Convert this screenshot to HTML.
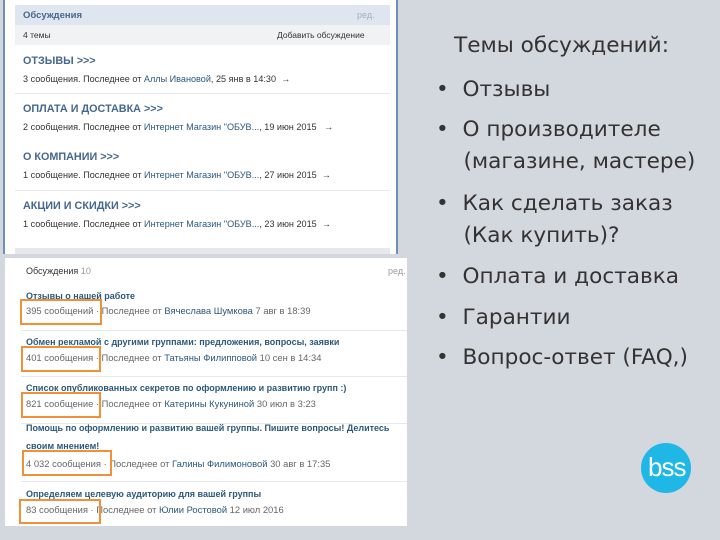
<!DOCTYPE html>
<html><head><meta charset="utf-8"><style>
body{margin:0;width:720px;height:540px;background:#d3d7de;position:relative;overflow:hidden;font-family:"Liberation Sans","Noto Sans CJK SC",sans-serif}
.a{position:absolute}
.p1{left:3px;top:0;width:391px;height:254px;background:#fff;border-left:2px solid #6f8fb8;border-right:2px solid #6f8fb8}
.t{font-size:9px;color:#333;white-space:nowrap}
.h{font-size:10.8px;font-weight:bold;color:#45688e;white-space:nowrap}
.s{font-size:9.1px;color:#333;white-space:nowrap}
.s b{font-weight:normal;color:#2b587a}
.hr{height:1px;background:#e5e8ec}
.p2{left:5px;top:258px;width:402px;height:268px;background:#fff}
.h2{font-size:9px;font-weight:bold;color:#2b587a;white-space:nowrap}
.s2{font-size:9.4px;color:#666;white-space:nowrap}
.s2 b{font-weight:normal;color:#2b587a}
.box{border:2px solid #f0913a}
.r{font-size:21.6px;color:#333;white-space:nowrap;font-family:"DejaVu Sans",sans-serif}
</style></head><body>
<div class="a p1">
 <div class="a" style="left:10px;top:5px;width:375px;height:20px;background:#dfe6ef"></div>
 <div class="a h" style="left:18px;top:10px;font-size:9.5px">Обсуждения</div>
 <div class="a t" style="left:352px;top:10px;color:#9fb1c6">ред.</div>
 <div class="a" style="left:10px;top:25px;width:375px;height:20px;background:#f1f2f4"></div>
 <div class="a t" style="left:18px;top:30px;font-size:8.5px">4 темы</div>
 <div class="a t" style="left:272px;top:30px;font-size:8.5px">Добавить обсуждение</div>
 <div class="a h" style="left:18px;top:55px">ОТЗЫВЫ &gt;&gt;&gt;</div>
 <div class="a s" style="left:18px;top:74px">3 сообщения. Последнее от <b>Аллы Ивановой</b>, 25 янв в 14:30 &nbsp;→</div>
 <div class="a hr" style="left:10px;top:93px;width:375px"></div>
 <div class="a h" style="left:18px;top:103px">ОПЛАТА И ДОСТАВКА &gt;&gt;&gt;</div>
 <div class="a s" style="left:18px;top:122px">2 сообщения. Последнее от <b>Интернет Магазин "ОБУВ...</b>, 19 июн 2015 &nbsp;&nbsp;→</div>
 <div class="a h" style="left:18px;top:151px">О КОМПАНИИ &gt;&gt;&gt;</div>
 <div class="a s" style="left:18px;top:170px">1 сообщение. Последнее от <b>Интернет Магазин "ОБУВ...</b>, 27 июн 2015 &nbsp;→</div>
 <div class="a hr" style="left:10px;top:190px;width:375px"></div>
 <div class="a h" style="left:18px;top:200px">АКЦИИ И СКИДКИ &gt;&gt;&gt;</div>
 <div class="a s" style="left:18px;top:219px">1 сообщение. Последнее от <b>Интернет Магазин "ОБУВ...</b>, 23 июн 2015 &nbsp;→</div>
 <div class="a" style="left:10px;top:248px;width:375px;height:6px;background:#e6e8eb"></div>
</div>
<div class="a p2">
 <div class="a t" style="left:21px;top:8px">Обсуждения <span style="color:#999">10</span></div>
 <div class="a t" style="left:383px;top:8px;color:#999">ред.</div>
 <div class="a h2" style="left:21px;top:33px">Отзывы о нашей работе</div>
 <div class="a s2" style="left:21px;top:47px">395 сообщений · Последнее от <b>Вячеслава Шумкова</b> 7 авг в 18:39</div>
 <div class="a box" style="left:15px;top:41px;width:78px;height:22px"></div>
 <div class="a hr" style="left:16px;top:72px;width:386px"></div>
 <div class="a h2" style="left:21px;top:79px">Обмен рекламой с другими группами: предложения, вопросы, заявки</div>
 <div class="a s2" style="left:21px;top:94px">401 сообщения · Последнее от <b>Татьяны Филипповой</b> 10 сен в 14:34</div>
 <div class="a box" style="left:16px;top:88px;width:76px;height:22px"></div>
 <div class="a hr" style="left:16px;top:118px;width:386px"></div>
 <div class="a h2" style="left:21px;top:125px">Список опубликованных секретов по оформлению и развитию групп :)</div>
 <div class="a s2" style="left:21px;top:140px">821 сообщение · Последнее от <b>Катерины Кукуниной</b> 30 июл в 3:23</div>
 <div class="a box" style="left:16px;top:134px;width:76px;height:22px"></div>
 <div class="a hr" style="left:16px;top:165px;width:386px"></div>
 <div class="a h2" style="left:21px;top:165px">Помощь по оформлению и развитию вашей группы. Пишите вопросы! Делитесь</div>
 <div class="a h2" style="left:21px;top:183px">своим мнением!</div>
 <div class="a s2" style="left:21px;top:200px">4 032 сообщения · Последнее от <b>Галины Филимоновой</b> 30 авг в 17:35</div>
 <div class="a box" style="left:17px;top:192px;width:86px;height:22px"></div>
 <div class="a hr" style="left:16px;top:223px;width:386px"></div>
 <div class="a h2" style="left:21px;top:231px">Определяем целевую аудиторию для вашей группы</div>
 <div class="a s2" style="left:21px;top:246px">83 сообщения · Последнее от <b>Юлии Ростовой</b> 12 июл 2016</div>
 <div class="a box" style="left:14px;top:241px;width:78px;height:21px"></div>
</div>
<div class="a r" style="left:454px;top:33px">Темы обсуждений:</div>
<div class="a r" style="left:436px;top:74px;line-height:32px">
<div>•&nbsp;&nbsp;Отзывы</div>
<div style="margin-top:8px">•&nbsp;&nbsp;О производителе<br>&nbsp;&nbsp;&nbsp;&nbsp;(магазине, мастере)</div>
<div style="margin-top:10px">•&nbsp;&nbsp;Как сделать заказ<br>&nbsp;&nbsp;&nbsp;&nbsp;(Как купить)?</div>
<div style="margin-top:9px">•&nbsp;&nbsp;Оплата и доставка</div>
<div style="margin-top:9px">•&nbsp;&nbsp;Гарантии</div>
<div style="margin-top:8px">•&nbsp;&nbsp;Вопрос-ответ (FAQ,)</div>
</div>
<div class="a" style="left:641px;top:443px;width:50px;height:50px;border-radius:50%;background:#1fb7e6"></div>
<div class="a" style="left:648px;top:452px;font-size:26px;color:#fff;font-family:'Liberation Sans',sans-serif;letter-spacing:-1px">bss</div>
</body></html>
